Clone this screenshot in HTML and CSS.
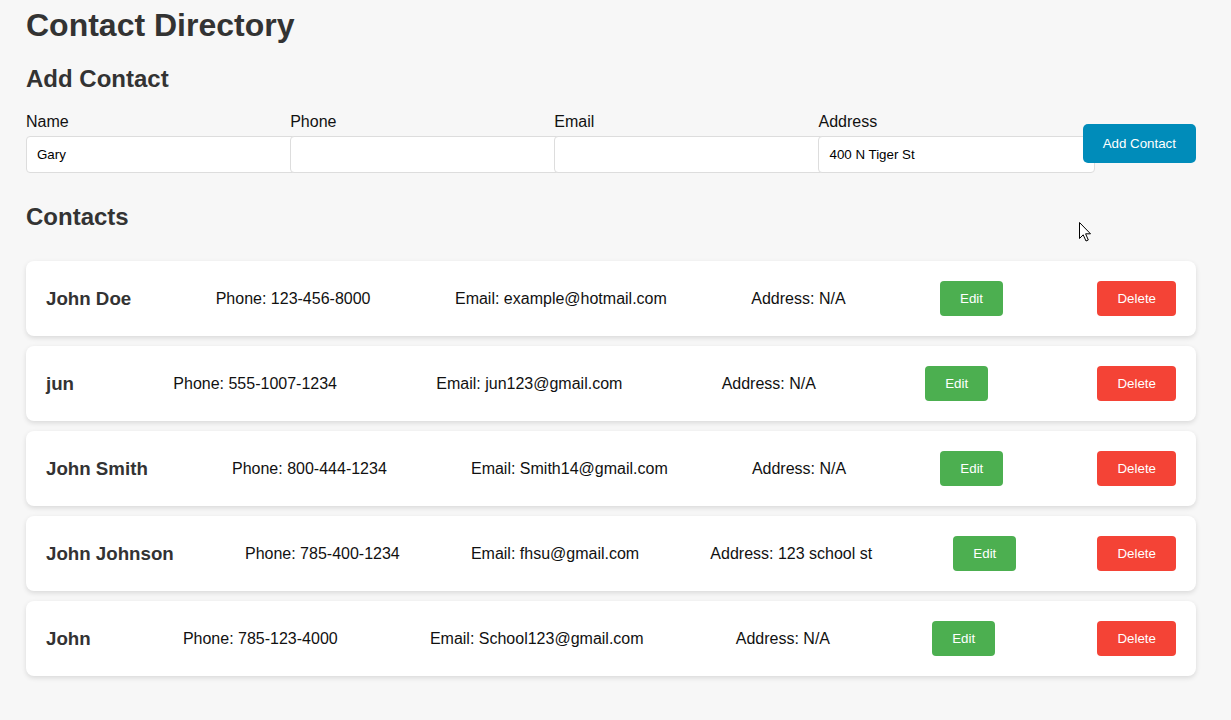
FILE: index.html
```html
<!DOCTYPE html>
<html lang="en">
<head>
<meta charset="utf-8">
<title>Contact Directory</title>
<link rel="stylesheet" href="styles.css">
</head>
<body>
<div class="container">
  <h1 class="title">Contact Directory</h1>
  <h2 class="section-title">Add Contact</h2>
  <form class="add-form">
    <div class="form-group">
      <label class="field-label">Name</label>
      <input class="field-input" type="text" value="Gary">
    </div>
    <div class="form-group">
      <label class="field-label">Phone</label>
      <input class="field-input" type="text" value="">
    </div>
    <div class="form-group">
      <label class="field-label">Email</label>
      <input class="field-input" type="text" value="">
    </div>
    <div class="form-group">
      <label class="field-label">Address</label>
      <input class="field-input" type="text" value="400 N Tiger St">
    </div>
    <button class="btn btn-add" type="button">Add Contact</button>
  </form>

  <h2 class="section-title contacts-title">Contacts</h2>
  <ul class="contact-list">
    <li class="contact-card">
      <h3 class="contact-name">John Doe</h3>
      <span class="contact-field">Phone: 123-456-8000</span>
      <span class="contact-field">Email: example@hotmail.com</span>
      <span class="contact-field">Address: N/A</span>
      <button class="btn btn-edit" type="button">Edit</button>
      <button class="btn btn-delete" type="button">Delete</button>
    </li>
    <li class="contact-card">
      <h3 class="contact-name">jun</h3>
      <span class="contact-field">Phone: 555-1007-1234</span>
      <span class="contact-field">Email: jun123@gmail.com</span>
      <span class="contact-field">Address: N/A</span>
      <button class="btn btn-edit" type="button">Edit</button>
      <button class="btn btn-delete" type="button">Delete</button>
    </li>
    <li class="contact-card">
      <h3 class="contact-name">John Smith</h3>
      <span class="contact-field">Phone: 800-444-1234</span>
      <span class="contact-field">Email: Smith14@gmail.com</span>
      <span class="contact-field">Address: N/A</span>
      <button class="btn btn-edit" type="button">Edit</button>
      <button class="btn btn-delete" type="button">Delete</button>
    </li>
    <li class="contact-card">
      <h3 class="contact-name">John Johnson</h3>
      <span class="contact-field">Phone: 785-400-1234</span>
      <span class="contact-field">Email: fhsu@gmail.com</span>
      <span class="contact-field">Address: 123 school st</span>
      <button class="btn btn-edit" type="button">Edit</button>
      <button class="btn btn-delete" type="button">Delete</button>
    </li>
    <li class="contact-card">
      <h3 class="contact-name">John</h3>
      <span class="contact-field">Phone: 785-123-4000</span>
      <span class="contact-field">Email: School123@gmail.com</span>
      <span class="contact-field">Address: N/A</span>
      <button class="btn btn-edit" type="button">Edit</button>
      <button class="btn btn-delete" type="button">Delete</button>
    </li>
  </ul>
</div>
<svg class="cursor" width="14" height="22" viewBox="0 0 14 22" aria-hidden="true">
  <path d="M1.5 1.5 L1.5 17.5 L5.2 13.8 L8 20 L10.3 19 L7.6 12.8 L12.5 12.8 Z" fill="#fff" stroke="#000" stroke-width="1" stroke-linejoin="miter"/>
</svg>
</body>
</html>
```

FILE: styles.css
```css
* {
  box-sizing: content-box;
}

body {
  margin: 0;
  background: #f7f7f7;
  font-family: "Liberation Sans", Arial, sans-serif;
  color: #111;
  position: relative;
  min-height: 720px;
}

.container {
  width: 1170px;
  padding: 7px 0 0 26px;
}

.title {
  margin: 0 0 21px;
  font-size: 32px;
  font-weight: bold;
  color: #333;
}

.section-title {
  margin: 0 0 20px;
  font-size: 24px;
  font-weight: bold;
  color: #333;
}

.contacts-title {
  margin-bottom: 30px;
}

.add-form {
  display: flex;
  align-items: center;
  gap: 10px;
  margin: 0 0 30px;
}

.form-group {
  flex: 1;
  min-width: 0;
}

.field-label {
  display: block;
  font-size: 16px;
  margin-bottom: 5px;
  color: #111;
}

.field-input {
  display: block;
  width: 100%;
  padding: 10px;
  border: 1px solid #ddd;
  border-radius: 4px;
  background: #fff;
  font-family: "Liberation Sans", Arial, sans-serif;
  font-size: 13.33px;
  line-height: 15px;
  color: #000;
  margin: 0;
}

.btn {
  border: none;
  border-radius: 4px;
  color: #fff;
  font-family: "Liberation Sans", Arial, sans-serif;
  font-size: 13.33px;
  line-height: 15px;
  padding: 10px 20px;
  cursor: pointer;
  flex-shrink: 0;
}

.btn-add {
  background: #008cba;
  padding: 12px 20px;
  border-radius: 5px;
}

.btn-edit {
  background: #4caf50;
  margin-left: 10px;
}

.btn-delete {
  background: #f44336;
  margin-left: 10px;
}

.contact-list {
  list-style: none;
  margin: 0;
  padding: 0;
  display: flex;
  flex-direction: column;
  gap: 10px;
}

.contact-card {
  display: flex;
  justify-content: space-between;
  align-items: center;
  background: #fff;
  border-radius: 8px;
  padding: 20px;
  box-shadow: 0 2px 5px rgba(0, 0, 0, 0.12);
}

.contact-name {
  margin: 0;
  font-size: 18.72px;
  font-weight: bold;
  color: #333;
}

.contact-field {
  font-size: 16px;
  color: #111;
}

.cursor {
  position: absolute;
  left: 1078px;
  top: 221px;
}
```
